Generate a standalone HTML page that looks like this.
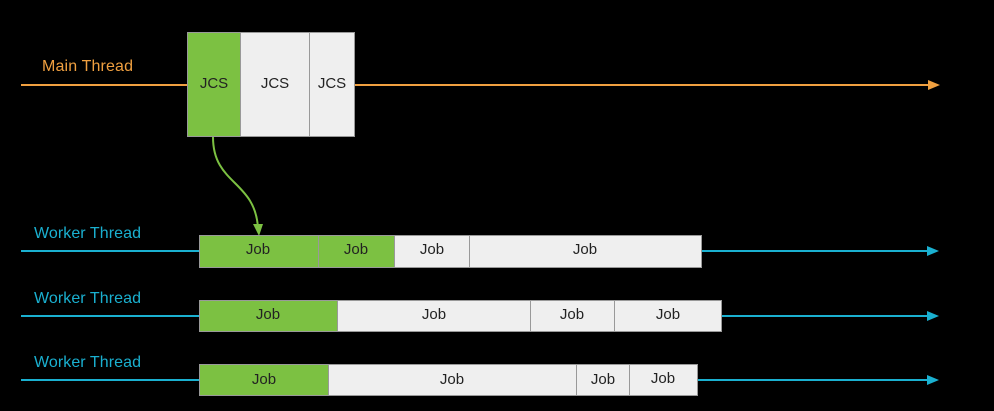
<!DOCTYPE html>
<html><head><style>html,body{margin:0;background:#000;}svg{display:block}</style></head><body>
<svg width="994" height="411" viewBox="0 0 994 411" xmlns="http://www.w3.org/2000/svg" font-family="Liberation Sans, sans-serif">
<rect width="994" height="411" fill="#000"/>
<line x1="21" y1="85" x2="930" y2="85" stroke="#f0a040" stroke-width="2"/>
<polygon points="928,80 940,85 928,90" fill="#f0a040"/>
<text x="42" y="71" fill="#f0a040" font-size="16" textLength="91">Main Thread</text>
<g stroke="#999" stroke-width="1">
<rect x="187.5" y="32.5" width="53" height="104" fill="#7cc142"/>
<rect x="240.5" y="32.5" width="69" height="104" fill="#efefef"/>
<rect x="309.5" y="32.5" width="45" height="104" fill="#efefef"/>
</g>
<g font-size="15" fill="#222" text-anchor="middle">
<text x="214" y="88">JCS</text><text x="275" y="88">JCS</text><text x="332" y="88">JCS</text>
</g>
<path d="M213,137 C213,185 255,180 258,228" stroke="#7cc142" stroke-width="2" fill="none"/>
<polygon points="253,224 259,236 263,224" fill="#7cc142"/>
<g fill="#1ab0d0" font-size="16">
<text x="34" y="238" textLength="107">Worker Thread</text>
<text x="34" y="303" textLength="107">Worker Thread</text>
<text x="34" y="367" textLength="107">Worker Thread</text>
</g>
<g stroke="#1ab0d0" stroke-width="2">
<line x1="21" y1="251" x2="930" y2="251"/>
<line x1="21" y1="316" x2="930" y2="316"/>
<line x1="21" y1="380" x2="930" y2="380"/>
</g>
<g fill="#1ab0d0">
<polygon points="927,246 939,251 927,256"/>
<polygon points="927,311 939,316 927,321"/>
<polygon points="927,375 939,380 927,385"/>
</g>
<g stroke="#999" stroke-width="1">
<rect x="199.5" y="235.5" width="119" height="32" fill="#7cc142"/>
<rect x="318.5" y="235.5" width="76" height="32" fill="#7cc142"/>
<rect x="394.5" y="235.5" width="75" height="32" fill="#efefef"/>
<rect x="469.5" y="235.5" width="232" height="32" fill="#efefef"/>
<rect x="199.5" y="300.5" width="138" height="31" fill="#7cc142"/>
<rect x="337.5" y="300.5" width="193" height="31" fill="#efefef"/>
<rect x="530.5" y="300.5" width="84" height="31" fill="#efefef"/>
<rect x="614.5" y="300.5" width="107" height="31" fill="#efefef"/>
<rect x="199.5" y="364.5" width="129" height="31" fill="#7cc142"/>
<rect x="328.5" y="364.5" width="248" height="31" fill="#efefef"/>
<rect x="576.5" y="364.5" width="53" height="31" fill="#efefef"/>
<rect x="629.5" y="364.5" width="68" height="31" fill="#efefef"/>
</g>
<g font-size="15" fill="#222" text-anchor="middle">
<text x="258" y="254">Job</text><text x="356" y="254">Job</text><text x="432" y="254">Job</text><text x="585" y="254">Job</text>
<text x="268" y="319">Job</text><text x="434" y="319">Job</text><text x="572" y="319">Job</text><text x="668" y="319">Job</text>
<text x="264" y="384">Job</text><text x="452" y="384">Job</text><text x="603" y="384">Job</text><text x="663" y="383">Job</text>
</g>
</svg>
</body></html>
